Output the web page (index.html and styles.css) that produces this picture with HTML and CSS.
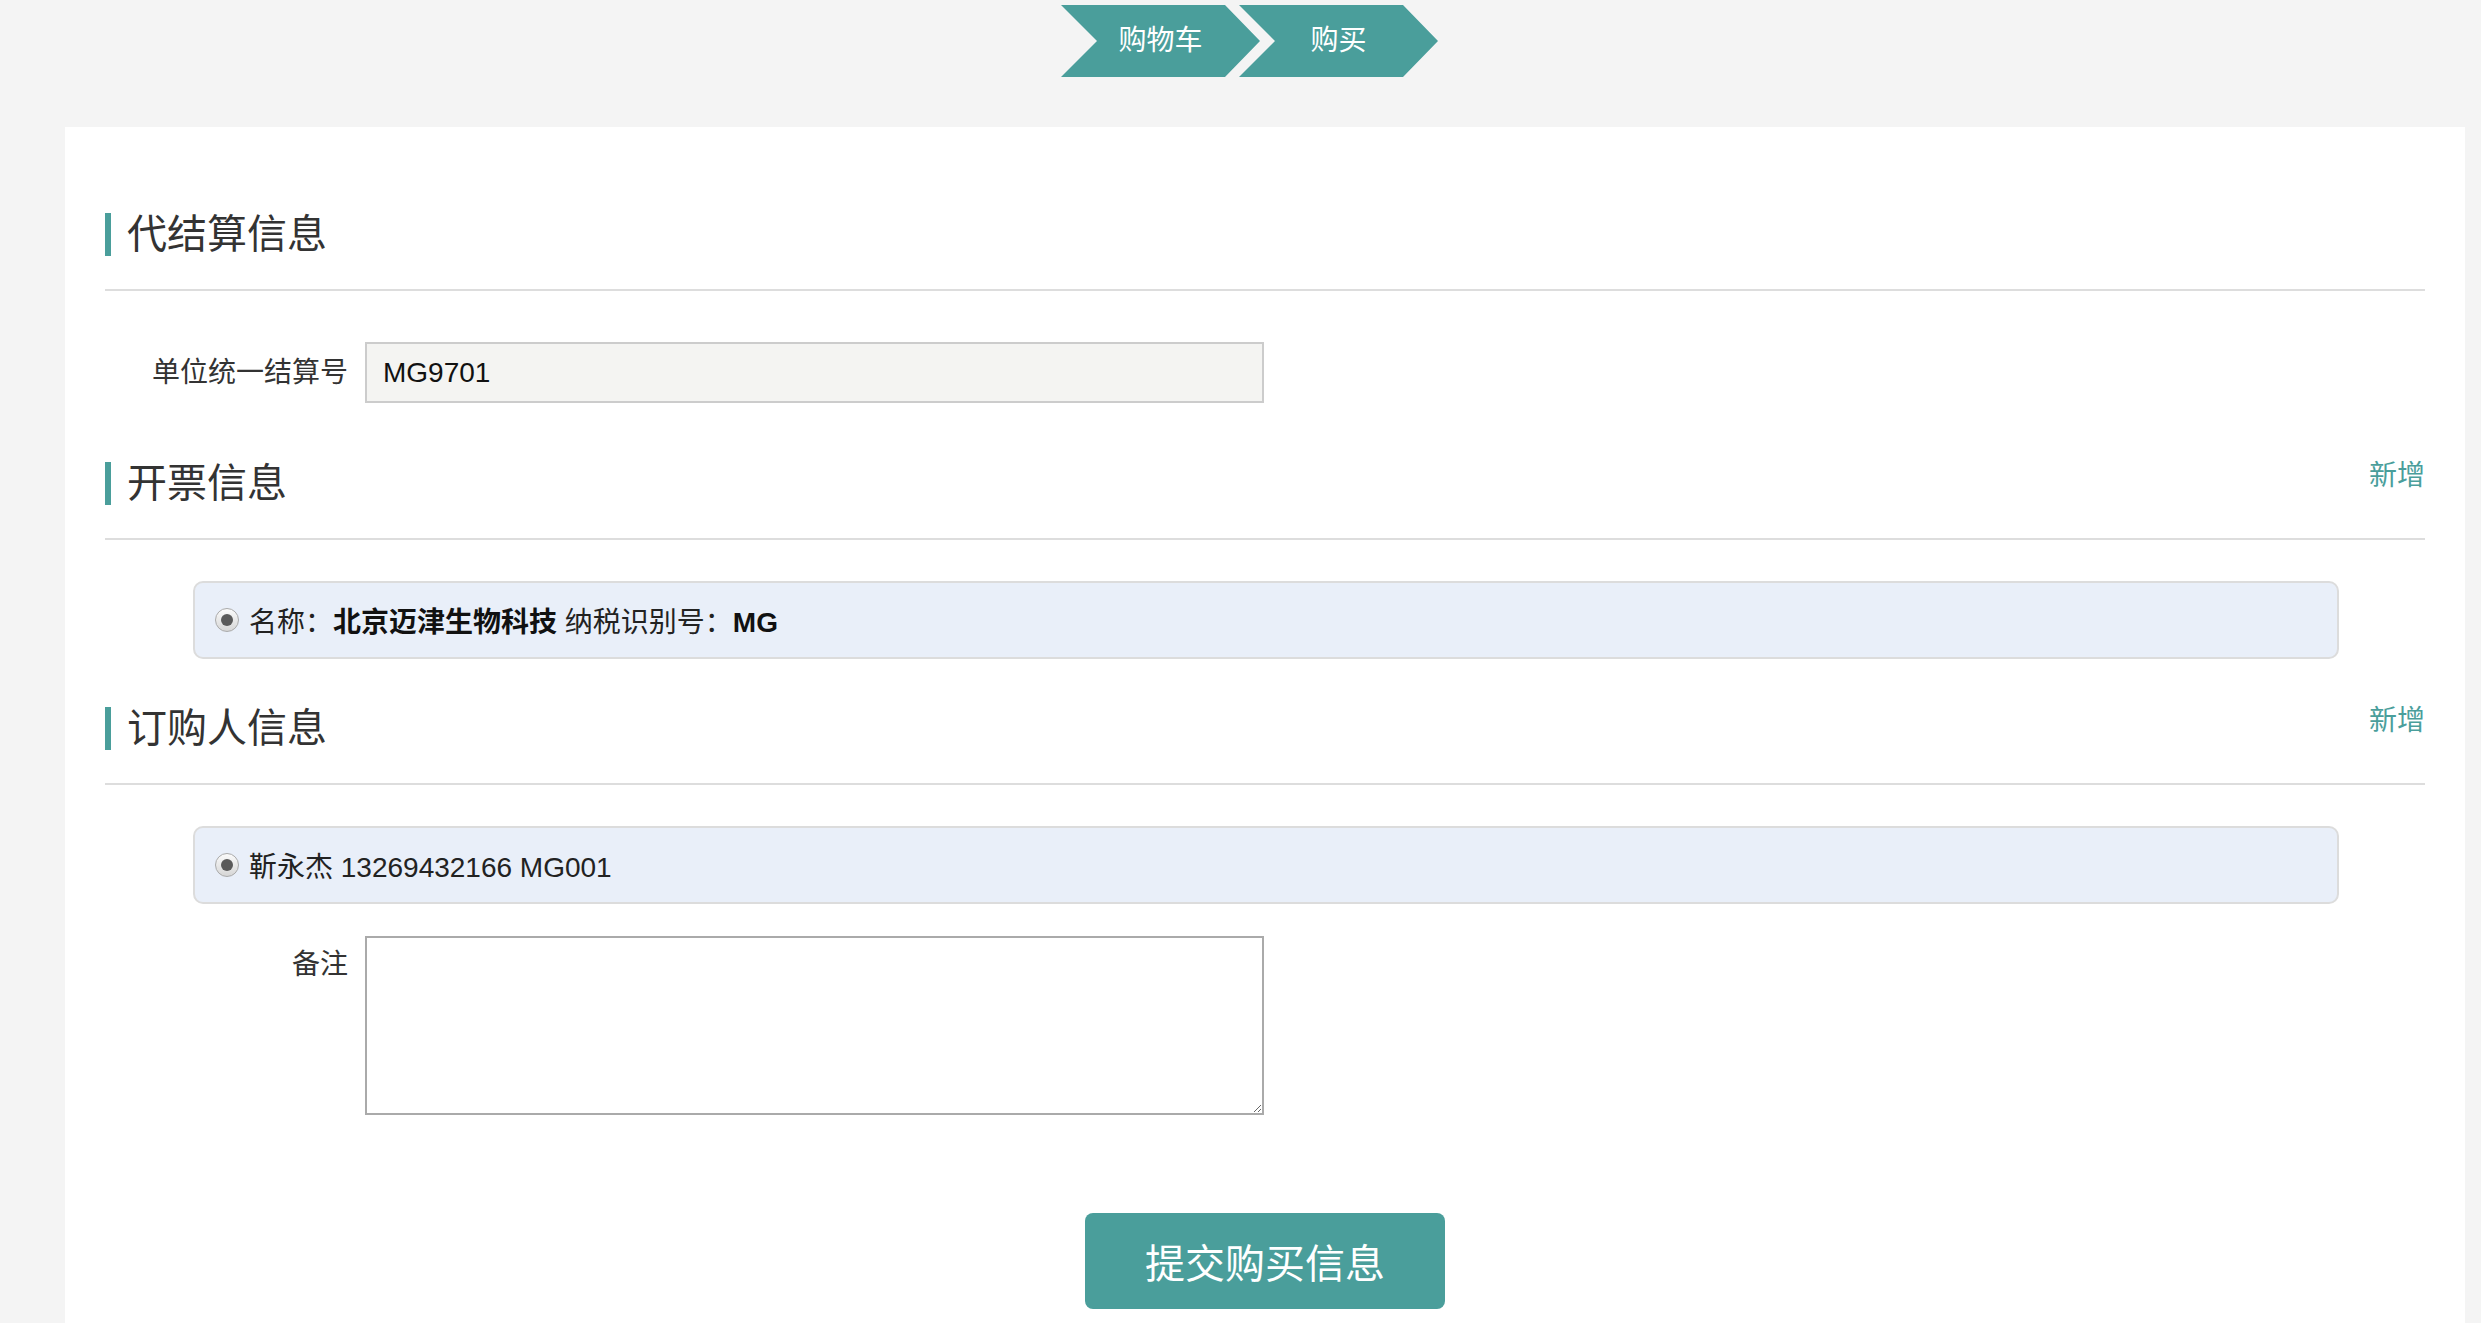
FILE: index.html
```html
<!DOCTYPE html>
<html>
<head>
<meta charset="UTF-8">
<title>购买信息</title>
<link rel="stylesheet" href="styles.css">
</head>
<body>
	<div class="steps">
		<div class="step">购物车</div>
		<div class="step next">购买</div>
	</div>
	<div class="panel">
		<div class="section-head">
			<h2 class="title">代结算信息</h2>
		</div>
		<div class="form-row first">
			<label class="label">单位统一结算号</label>
			<input class="field" type="text" value="MG9701">
		</div>

		<div class="section-head">
			<h2 class="title">开票信息</h2>
			<a class="add">新增</a>
		</div>
		<div class="option">
			<span class="radio"></span>
			<span class="option-text">名称：<b>北京迈津生物科技</b> 纳税识别号：<b>MG</b></span>
		</div>

		<div class="section-head">
			<h2 class="title">订购人信息</h2>
			<a class="add">新增</a>
		</div>
		<div class="option">
			<span class="radio"></span>
			<span class="option-text">靳永杰 13269432166 MG001</span>
		</div>

		<div class="form-row memo">
			<label class="label">备注</label>
			<textarea class="field area"></textarea>
		</div>

		<button class="submit">提交购买信息</button>
	</div>
</body>
</html>
```

FILE: styles.css
```css
		body {
			margin: 0;
			background: #f4f4f4;
			font-family: "Liberation Sans", "Noto Sans CJK SC", sans-serif;
			color: #333;
		}
		.steps {
			display: flex;
			justify-content: center;
			padding: 5px 0 0 18px;
			margin-bottom: 50px;
		}
		.step {
			width: 199px;
			height: 72px;
			line-height: 72px;
			text-align: center;
			color: #fff;
			font-size: 28px;
			background: #4a9e9b;
			clip-path: polygon(0 0, 164px 0, 199px 36px, 164px 72px, 0 72px, 36px 36px);
		}
		.step.next {
			margin-left: -21px;
		}
		.panel {
			margin: 0 16px 0 65px;
			background: #fff;
			padding: 86px 40px 0;
			min-height: calc(100vh - 213px);
		}
		.section-head {
			display: flex;
			justify-content: space-between;
			align-items: flex-start;
			padding-bottom: 33px;
			border-bottom: 2px solid #ddd;
			margin-top: 48px;
		}
		.section-head:first-child {
			margin-top: 0;
		}
		.title {
			margin: 0;
			font-size: 40px;
			line-height: 43px;
			font-weight: normal;
			color: #333;
			border-left: 6px solid #4a9e9b;
			padding-left: 16px;
		}
		.add {
			font-size: 28px;
			line-height: 28px;
			color: #4a9e9b;
			cursor: pointer;
		}
		.form-row {
			display: flex;
			align-items: center;
		}
		.form-row.first {
			margin: 51px 0 59px;
		}
		.label {
			width: 243px;
			margin-right: 17px;
			text-align: right;
			font-size: 28px;
			line-height: 28px;
			color: #333;
		}
		.field {
			box-sizing: border-box;
			width: 899px;
			height: 61px;
			border: 2px solid #ccc;
			background: #f4f4f2;
			padding: 0 16px;
			font-family: "Liberation Sans", "Noto Sans CJK SC", sans-serif;
			font-size: 28px;
			color: #111;
		}
		.option {
			display: flex;
			align-items: center;
			box-sizing: border-box;
			height: 78px;
			margin: 41px 86px 0 88px;
			padding-left: 20px;
			background: #e9eff9;
			border: 2px solid #dcdcdc;
			border-radius: 10px;
			font-size: 28px;
			color: #222;
		}
		.radio {
			box-sizing: border-box;
			width: 24px;
			height: 24px;
			margin-right: 10px;
			border: 1px solid #aaa;
			border-radius: 50%;
			background: linear-gradient(#fbfbfb, #d6d6d6);
			display: flex;
			align-items: center;
			justify-content: center;
		}
		.radio::after {
			content: "";
			width: 12px;
			height: 12px;
			border-radius: 50%;
			background: #5a5a5a;
		}
		.option-text b {
			color: #111;
		}
		.form-row.memo {
			margin-top: 32px;
			align-items: flex-start;
		}
		.form-row.memo .label {
			padding-top: 15px;
		}
		.area {
			height: 179px;
			background: #fff;
			border-color: #aaa;
			resize: both;
		}
		.submit {
			display: block;
			margin: 98px auto 0;
			width: 360px;
			height: 96px;
			border: none;
			border-radius: 8px;
			background: #4a9e9b;
			color: #fff;
			font-family: "Noto Sans CJK SC", sans-serif;
			font-size: 40px;
			cursor: pointer;
		}
```
